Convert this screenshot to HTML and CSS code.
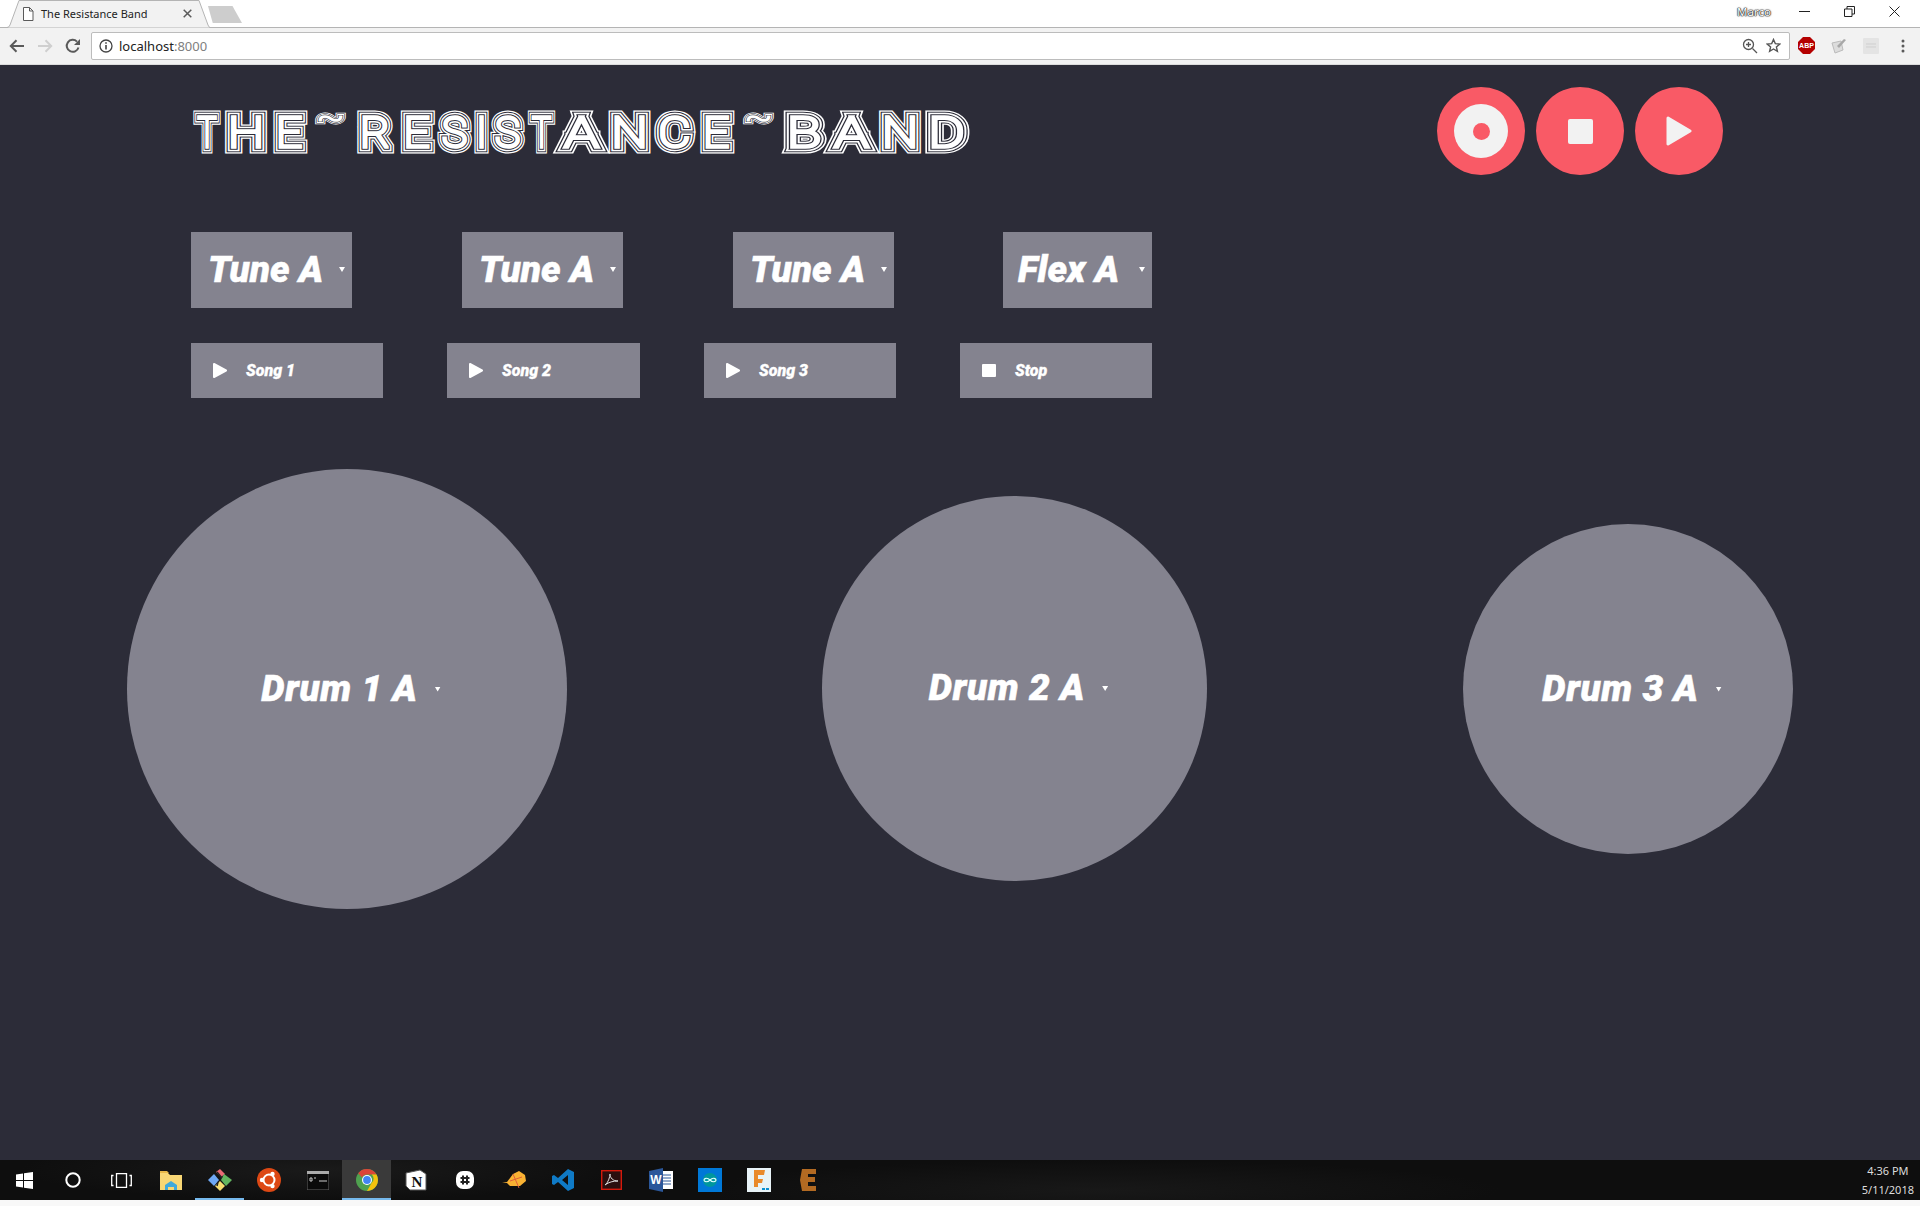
FILE: index.html
```html
<!DOCTYPE html>
<html lang="en">
<head>
<meta charset="utf-8">
<title>The Resistance Band</title>
<link rel="stylesheet" href="styles.css">
</head>
<body>
<div class="tabstrip">
  <div class="tab">
    <svg class="tab-shape" width="206" height="28" viewBox="0 0 206 28"><path d="M0 27.500h3q2 0 3-2.500L15 .5h180l9 24.500q1 2.500 2 2.500" fill="#f2f2f2" stroke="#b4b4b4"/></svg>
    <svg class="favicon" width="12" height="14" viewBox="0 0 12 14"><path d="M1.500.5h6l3.500 3.500v9.500h-9.500zM7.500.5v3.500h3.500" fill="#fff" stroke="#5a5a5a"/></svg>
    <span class="tab-title">The Resistance Band</span>
    <svg class="tab-close" width="9" height="9" viewBox="0 0 9 9"><path d="M.7.7l7.600 7.600M8.300.7L.7 8.300" stroke="#5a5a5a" stroke-width="1.500"/></svg>
  </div>
  <div class="newtab"></div>
  <div class="winbar">
    <span class="user">Marco</span>
    <svg class="winctl" width="11" height="11" viewBox="0 0 11 11"><path d="M0 5.500h11" stroke="#222"/></svg>
    <svg class="winctl" width="11" height="11" viewBox="0 0 11 11"><path d="M.5 3h7.500v7.500h-7.500zM3 3V.5h7.500v7.500H8" fill="none" stroke="#222"/></svg>
    <svg class="winctl" width="11" height="11" viewBox="0 0 11 11"><path d="M.5.5l10 10M10.500.5l-10 10" stroke="#222"/></svg>
  </div>
</div>
<div class="toolbar">
  <svg class="nav" width="16" height="14" viewBox="0 0 16 14"><path d="M15 7H2M7.500 1.200L1.800 7l5.700 5.800" fill="none" stroke="#5a5a5a" stroke-width="2"/></svg>
  <svg class="nav" width="16" height="14" viewBox="0 0 16 14"><path d="M1 7h13M8.500 1.200L14.200 7l-5.700 5.800" fill="none" stroke="#cfcfcf" stroke-width="2"/></svg>
  <svg class="nav" width="16" height="16" viewBox="0 0 16 16"><path d="M13.500 9.500A6 6 0 1 1 12 3.600" fill="none" stroke="#5a5a5a" stroke-width="2"/><path d="M15 1v6H9z" fill="#5a5a5a"/></svg>
  <div class="omnibox">
    <svg width="14" height="14" viewBox="0 0 14 14"><circle cx="7" cy="7" r="6" fill="none" stroke="#444" stroke-width="1.300"/><path d="M7 6v4.500M7 3.300v1.500" stroke="#444" stroke-width="1.600"/></svg>
    <span class="url">localhost<span class="port">:8000</span></span>
    <span class="spacer"></span>
    <svg width="16" height="16" viewBox="0 0 16 16"><circle cx="6.500" cy="6.500" r="5" fill="none" stroke="#555" stroke-width="1.300"/><path d="M10.500 10.500l4.500 4.500M4 6.500h5M6.500 4v5" stroke="#555" stroke-width="1.300"/></svg>
    <svg class="star" width="15" height="15" viewBox="0 0 15 15"><path d="M7.500 1.500l1.800 4.100 4.500.4-3.400 2.900 1 4.400-3.900-2.300-3.900 2.300 1-4.400L1.200 6l4.500-.4z" fill="none" stroke="#555" stroke-width="1.400"/></svg>
  </div>
  <div class="exts">
    <svg width="17" height="17" viewBox="0 0 17 17"><path d="M5 0h7l5 5v7l-5 5H5l-5-5V5z" fill="#b40000"/><text x="8.500" y="11" class="abp">ABP</text></svg>
    <svg width="16" height="16" viewBox="0 0 16 16"><path d="M1 5l9-2 2 9-8 3z" fill="#dcdcdc" stroke="#bbb"/><path d="M6 8l7-7 2 1-7 8z" fill="#a8a8a8"/></svg>
    <svg width="16" height="16" viewBox="0 0 16 16"><rect width="16" height="16" rx="1" fill="#e4e4e4"/><path d="M3 6h10M3 9h10" stroke="#cfcfcf"/></svg>
    <svg width="4" height="14" viewBox="0 0 4 14"><circle cx="2" cy="2" r="1.500" fill="#5a5a5a"/><circle cx="2" cy="7" r="1.500" fill="#5a5a5a"/><circle cx="2" cy="12" r="1.500" fill="#5a5a5a"/></svg>
  </div>
</div>

<main class="page">
  <header class="head">
    <h1 class="logo">
      <svg width="820" height="64" viewBox="0 0 820 64" role="img">
        <defs>
          <text id="logotext" class="logotext" y="46" lengthAdjust="spacingAndGlyphs"><tspan x="30" textLength="19" lengthAdjust="spacingAndGlyphs">T</tspan><tspan x="69" textLength="36" lengthAdjust="spacingAndGlyphs">H</tspan><tspan x="112" textLength="26" lengthAdjust="spacingAndGlyphs">E</tspan><tspan class="tilde" x="153.500" y="27" textLength="28" lengthAdjust="spacingAndGlyphs">~</tspan><tspan x="198" y="46" textLength="30" lengthAdjust="spacingAndGlyphs">R</tspan><tspan x="239.500" textLength="26" lengthAdjust="spacingAndGlyphs">E</tspan><tspan x="277.500" textLength="25" lengthAdjust="spacingAndGlyphs">S</tspan><tspan x="304.500">I</tspan><tspan x="330.500" textLength="25" lengthAdjust="spacingAndGlyphs">S</tspan><tspan x="364.500" textLength="19" lengthAdjust="spacingAndGlyphs">T</tspan><tspan x="404.500" textLength="34" lengthAdjust="spacingAndGlyphs">A</tspan><tspan x="452.500" textLength="36" lengthAdjust="spacingAndGlyphs">N</tspan><tspan x="497.500" textLength="32" lengthAdjust="spacingAndGlyphs">C</tspan><tspan x="539" textLength="26" lengthAdjust="spacingAndGlyphs">E</tspan><tspan class="tilde" x="581.500" y="27" textLength="28" lengthAdjust="spacingAndGlyphs">~</tspan><tspan x="627" y="46" textLength="34" lengthAdjust="spacingAndGlyphs">B</tspan><tspan x="674.500" textLength="34" lengthAdjust="spacingAndGlyphs">A</tspan><tspan x="723" textLength="36" lengthAdjust="spacingAndGlyphs">N</tspan><tspan x="769.500" textLength="36" lengthAdjust="spacingAndGlyphs">D</tspan></text>
        </defs>
        <use href="#logotext" class="ring ring1"/>
        <use href="#logotext" class="ring ring2"/>
        <use href="#logotext" class="ring ring3"/>
        <use href="#logotext" class="ring ring4"/>
        <use href="#logotext" class="ring ring5"/>
      </svg>
    </h1>
    <div class="transport">
      <button class="round"><span class="rec"><span class="rec-dot"></span></span></button>
      <button class="round"><span class="stopmark"></span></button>
      <button class="round"><svg width="26" height="30" viewBox="0 0 26 30"><path d="M2 2l22 13L2 28z" fill="#f2f2f2" stroke="#f2f2f2" stroke-width="3" stroke-linejoin="round"/></svg></button>
    </div>
  </header>

  <section class="controls">
    <div class="row selects">
      <div class="select"><span>Tune A</span><i class="caret"></i></div>
      <div class="select"><span>Tune A</span><i class="caret"></i></div>
      <div class="select"><span>Tune A</span><i class="caret"></i></div>
      <div class="select flex"><span>Flex A</span><i class="caret"></i></div>
    </div>
    <div class="row songs">
      <button class="song"><svg width="14" height="15" viewBox="0 0 14 15"><path d="M1 1l12 6.500L1 14z" fill="#fff" stroke="#fff" stroke-width="2" stroke-linejoin="round"/></svg><span>Song 1</span></button>
      <button class="song"><svg width="14" height="15" viewBox="0 0 14 15"><path d="M1 1l12 6.500L1 14z" fill="#fff" stroke="#fff" stroke-width="2" stroke-linejoin="round"/></svg><span>Song 2</span></button>
      <button class="song"><svg width="14" height="15" viewBox="0 0 14 15"><path d="M1 1l12 6.500L1 14z" fill="#fff" stroke="#fff" stroke-width="2" stroke-linejoin="round"/></svg><span>Song 3</span></button>
      <button class="song"><svg width="14" height="15" viewBox="0 0 14 15"><rect y="1" width="14" height="13" rx="1" fill="#fff"/></svg><span>Stop</span></button>
    </div>
  </section>

  <section class="drums">
    <div class="drum d1"><span>Drum 1 A</span><i class="caret"></i></div>
    <div class="drum d2"><span>Drum 2 A</span><i class="caret"></i></div>
    <div class="drum d3"><span>Drum 3 A</span><i class="caret"></i></div>
  </section>
</main>

<footer class="taskbar">
  <div class="slot first"><svg width="17" height="17" viewBox="0 0 17 17"><path d="M0 2.500l7-1v6.500H0zM8 1.300L17 0v8H8zM0 9h7v6.500l-7-1zM8 9h9v8l-9-1.300z" fill="#fff"/></svg></div>
  <div class="slot"><svg width="16" height="16" viewBox="0 0 16 16"><circle cx="8" cy="8" r="6.700" fill="none" stroke="#fff" stroke-width="2"/></svg></div>
  <div class="slot"><svg width="21" height="15" viewBox="0 0 21 15"><path d="M5.500.7h10v13.600h-10zM2.500 2.500H.7v10h1.800M18.500 2.500h1.800v10h-1.800" fill="none" stroke="#fff" stroke-width="1.300"/></svg></div>
  <div class="slot"><svg width="22" height="20" viewBox="0 0 22 20"><path d="M0 3h8l2 2h12v15H0z" fill="#f8d775"/><path d="M0 1h7l2 2H0z" fill="#e9b949"/><path d="M5 20v-5l6-4 6 4v5h-3v-3H8v3z" fill="#3fa9dd"/></svg></div>
  <div class="slot active"><svg width="24" height="24" viewBox="0 0 24 24"><path d="M8 4l4-3 5 5-4 3z" fill="#e96a75"/><path d="M0 12l6-6 5 6-5 6z" fill="#6fa8f5"/><path d="M16 6l8 6-6 6-5-6z" fill="#62b560"/><path d="M7 18l5-5 5 5-5 5z" fill="#f7dd70"/><path d="M9 4l5 6M10 14l-1 4" stroke="#222" stroke-width="1.500"/></svg></div>
  <div class="slot"><svg width="24" height="24" viewBox="0 0 24 24"><circle cx="12" cy="12" r="12" fill="#dd4814"/><circle cx="12" cy="12" r="5.500" fill="none" stroke="#fff" stroke-width="2"/><circle cx="5" cy="12" r="2.200" fill="#fff"/><circle cx="15.500" cy="5.900" r="2.200" fill="#fff"/><circle cx="15.500" cy="18.100" r="2.200" fill="#fff"/></svg></div>
  <div class="slot"><svg width="22" height="19" viewBox="0 0 22 19"><rect width="22" height="19" fill="#0a0a0a" stroke="#666"/><rect width="22" height="3" fill="#aaa"/><path d="M3 7h2v3H3zM7 7h2M12 10h8" stroke="#ccc"/></svg></div>
  <div class="slot chrome"><svg width="22" height="22" viewBox="0 0 22 22"><circle cx="11" cy="11" r="11" fill="#4fa14f"/><path d="M11 0a11 11 0 0 1 9.500 5.500H11A5.500 5.500 0 0 0 6 8.500L2.200 4.200A11 11 0 0 1 11 0z" fill="#dc4437"/><path d="M20.500 5.500A11 11 0 0 1 11 22l4.700-8.200a5.500 5.500 0 0 0 0-8.300z" fill="#f4c20d"/><circle cx="11" cy="11" r="5" fill="#fff"/><circle cx="11" cy="11" r="3.900" fill="#4285f4"/></svg></div>
  <div class="slot"><svg width="22" height="22" viewBox="0 0 22 22"><path d="M1 4l14-3 6 4v16H5l-4-4z" fill="#fff" stroke="#555"/><text x="12" y="18" class="notion">N</text></svg></div>
  <div class="slot"><svg width="18" height="18" viewBox="0 0 18 18"><rect width="18" height="18" rx="7" fill="#fff"/><path d="M7 4.500v9M11 4.500v9M4.500 7h9M4.500 11h9" stroke="#222" stroke-width="2"/></svg></div>
  <div class="slot"><svg width="24" height="20" viewBox="0 0 24 20"><path d="M0 13l5-1 6-8 6-3 6 4 1 6-6 5H8l-3-3z" fill="#f9b233"/><path d="M11 4l6 14M8 11l12-4" stroke="#e0603a"/></svg></div>
  <div class="slot"><svg width="24" height="24" viewBox="0 0 24 24"><path d="M17 1l6 3v16l-6 3-10-9-4 3-2-1V8l2-1 4 3zM17 7l-6 5 6 5z" fill="#0f7ac6"/></svg></div>
  <div class="slot"><svg width="21" height="20" viewBox="0 0 21 20"><rect x=".7" y=".7" width="19.600" height="18.600" fill="#2a0f0f" stroke="#d4190c" stroke-width="1.400"/><path d="M4 15c3-2 5-8 5-11 0 4 3 7 8 7-5 0-9 1-13 4z" fill="none" stroke="#ddd"/></svg></div>
  <div class="slot"><svg width="24" height="24" viewBox="0 0 24 24"><rect x="8" y="3" width="16" height="18" fill="#fff"/><path d="M14 7h8M14 10h8M14 13h8M14 16h8" stroke="#2b579a"/><path d="M0 3l14-3v24L0 21z" fill="#2b579a"/><text x="7" y="16" class="word">W</text></svg></div>
  <div class="slot"><svg width="24" height="24" viewBox="0 0 24 24"><rect width="24" height="24" fill="#0078d7"/><circle cx="12" cy="12" r="7" fill="#00979d"/><path d="M12 12c-3-3-6-1.500-6 0s3 3 6 0 6-1.500 6 0-3 3-6 0z" fill="none" stroke="#dff" stroke-width="1.200"/></svg></div>
  <div class="slot"><svg width="24" height="24" viewBox="0 0 24 24"><rect width="24" height="24" fill="#e8f3f7"/><path d="M7 2h11l-1 5h-6v4h5l-1 4h-4v4H7z" fill="#e98a2b"/><path d="M15 20h3v2h-3zM19 20h3v2h-3z" fill="#0a8fd0"/></svg></div>
  <div class="slot"><svg width="16" height="24" viewBox="0 0 16 24"><path d="M2 1h14v5H8v3h7v5H8v4h8v5H2L0 12z" fill="#b36a22"/></svg></div>
  <div class="spacer"></div>
  <div class="clock"><span>4:36 PM</span><span>5/11/2018</span></div>
</footer>
<div class="underscreen"></div>
</body>
</html>
```
FILE: styles.css
```css
* { box-sizing: border-box; }
html, body { margin: 0; padding: 0; }
body {
  width: 1920px;
  height: 1206px;
  display: flex;
  flex-direction: column;
  overflow: hidden;
  background: #fff;
  font-family: "Noto Sans", "Open Sans", sans-serif;
}
svg { display: block; flex: none; }

/* browser chrome */
.tabstrip {
  height: 28px;
  display: flex;
  align-items: flex-end;
  background: #fff;
  border-bottom: 1px solid #b4b4b4;
  padding-left: 4px;
}
.tab {
  position: relative;
  width: 206px;
  height: 28px;
  margin-bottom: -1px;
  display: flex;
  align-items: center;
  padding: 0 18px 1px 18px;
  z-index: 1;
}
.tab-shape { position: absolute; left: 0; top: 0; z-index: -1; }
.favicon { margin-right: 7px; }
.tab-title { flex: 1; font-size: 11px; color: #222; white-space: nowrap; }
.tab-close { margin-right: 0; }
.newtab {
  width: 34px;
  height: 17px;
  margin: 0 0 4px -2px;
  background: #cdcdcd;
  clip-path: polygon(0 0, 72% 0, 100% 100%, 14% 100%);
}
.winbar {
  margin-left: auto;
  height: 27px;
  display: flex;
  align-items: center;
  padding: 0 20px 5px 0;
}
.user {
  font-size: 11.500px;
  color: #fff;
  text-shadow: 0 0 1px #222, 0 0 1px #222, 0 0 1px #222, 0 0 2px #444;
  margin-right: 28px;
}
.winctl { margin-left: 34px; }
.winctl:first-of-type { margin-left: 0; }
.toolbar {
  height: 37px;
  display: flex;
  align-items: center;
  background: #f2f2f2;
  padding: 0 0 1px 9px;
  border-bottom: 1px solid #dcdcdc;
}
.nav { margin-right: 12px; }
.omnibox {
  width: 1699px;
  height: 28px;
  margin-left: -2px;
  display: flex;
  align-items: center;
  background: #fff;
  border: 1px solid #bcbcbc;
  border-radius: 2px;
  padding: 0 8px 0 7px;
}
.url { margin-left: 6px; font-size: 13px; color: #222; }
.port { color: #808080; }
.spacer { flex: 1; }
.star { margin-left: 8px; }
.exts { flex: 1; display: flex; align-items: center; padding-left: 8px; gap: 16px; }
.exts svg:last-child { margin-left: 6px; }
.abp { font: 700 7px "Liberation Sans", sans-serif; fill: #fff; text-anchor: middle; }

/* page */
.page {
  flex: 1;
  background: #2c2c38;
  display: flex;
  flex-direction: column;
  font-family: "Roboto", "Inter", sans-serif;
}
.head {
  display: flex;
  justify-content: space-between;
  padding: 22px 197px 0 177px;
  height: 110px;
}
.logo { margin: 14px 0 0; height: 64px; font-size: inherit; }
.logotext {
  font: 100 42px "Roboto", sans-serif;
  text-anchor: middle;
  fill: var(--f);
  stroke-width: var(--w);
  stroke-linejoin: miter;
  stroke-linecap: butt;
  stroke-miterlimit: 2;
}
.tilde { font-size: 32px; stroke-width: calc(var(--w) * .55); }
.ring { --f: #2c2c38; }
.ring1 { --w: 13px; stroke: #fff; }
.ring2 { --w: 10.500px; stroke: #2c2c38; }
.ring3 { --w: 8.500px; stroke: #fff; }
.ring4 { --w: 5.500px; stroke: #2c2c38; }
.ring5 { --w: 3.500px; --f: #fff; stroke: #fff; }

.transport { display: flex; gap: 11px; }
.round {
  width: 88px;
  height: 88px;
  border: 0;
  padding: 0;
  border-radius: 50%;
  background: #f95a66;
  display: flex;
  align-items: center;
  justify-content: center;
}
.rec {
  width: 54px;
  height: 54px;
  border-radius: 50%;
  background: #f2f2f2;
  display: flex;
  align-items: center;
  justify-content: center;
}
.rec-dot { width: 17px; height: 17px; border-radius: 50%; background: #f95a66; }
.stopmark { width: 25px; height: 25px; border-radius: 2px; background: #f2f2f2; }

.controls { margin: 57px 0 0 191px; width: 961px; }
.row { display: flex; justify-content: space-between; }
.selects { justify-content: flex-start; gap: 110px; }
.select {
  position: relative;
  width: 161px;
  height: 76px;
  background: #84838f;
  color: #fff;
  display: flex;
  align-items: center;
  padding: 0 0 2px 17px;
  font-size: 37px;
  font-weight: 900;
  font-style: italic;
  -webkit-text-stroke: .5px #fff;
}
.select.flex { width: 149px; padding-left: 15px; margin-left: -1px; }
.caret {
  position: absolute;
  right: 7px;
  top: 35px;
  width: 6px;
  height: 5px;
  background: #fff;
  clip-path: polygon(0 0, 100% 0, 50% 100%);
}
.songs { margin-top: 35px; }
.song {
  width: 192px;
  height: 55px;
  border: 0;
  background: #84838f;
  color: #fff;
  display: flex;
  align-items: center;
  padding: 0 0 0 22px;
  gap: 19px;
  font: italic 900 16px "Roboto", sans-serif;
  -webkit-text-stroke: .3px #fff;
}
.song:nth-child(2) { width: 193px; }

.drums {
  margin-top: 71px;
  padding: 0 127px;
  display: flex;
  justify-content: space-between;
  align-items: center;
}
.drum {
  position: relative;
  border-radius: 50%;
  background: #84838f;
  color: #fff;
  display: flex;
  align-items: center;
  justify-content: center;
  padding: 0 6px 2px 0;
  font-size: 37px;
  font-weight: 900;
  font-style: italic;
  letter-spacing: .6px;
  -webkit-text-stroke: .5px #fff;
}
.d1 { width: 440px; height: 440px; }
.d2 { width: 385px; height: 385px; margin: 0 1px 1px 0; }
.d3 { width: 330px; height: 330px; }
.drum span { margin-right: 20px; }
.drum .caret { position: static; margin: 2px -17px 0 0; transform: translateX(-3px); }

/* taskbar */
.taskbar {
  height: 40px;
  display: flex;
  align-items: center;
  background:
    radial-gradient(ellipse 300px 30px at 320px 10px, #1a1a1a, transparent),
    radial-gradient(ellipse 400px 30px at 1100px 30px, #181818, transparent),
    #0e0e0e;
  color: #ddd;
}
.slot {
  width: 49px;
  height: 40px;
  display: flex;
  align-items: center;
  justify-content: center;
}
.slot.first { width: 48px; }
.slot.active { border-bottom: 2px solid #76b9ed; padding-top: 2px; }
.slot.chrome { background: #3a3a3a; border-bottom: 2px solid #76b9ed; padding-top: 2px; }
.notion { font: 900 15px "Liberation Serif", serif; text-anchor: middle; fill: #111; }
.word { font: 700 12px "Liberation Sans", sans-serif; text-anchor: middle; fill: #fff; }
.clock {
  display: flex;
  flex-direction: column;
  align-items: center;
  gap: 3px;
  padding-right: 6px;
  font-size: 11px;
  line-height: 16px;
}
.underscreen { height: 6px; background: #f8f8f8; }
```
